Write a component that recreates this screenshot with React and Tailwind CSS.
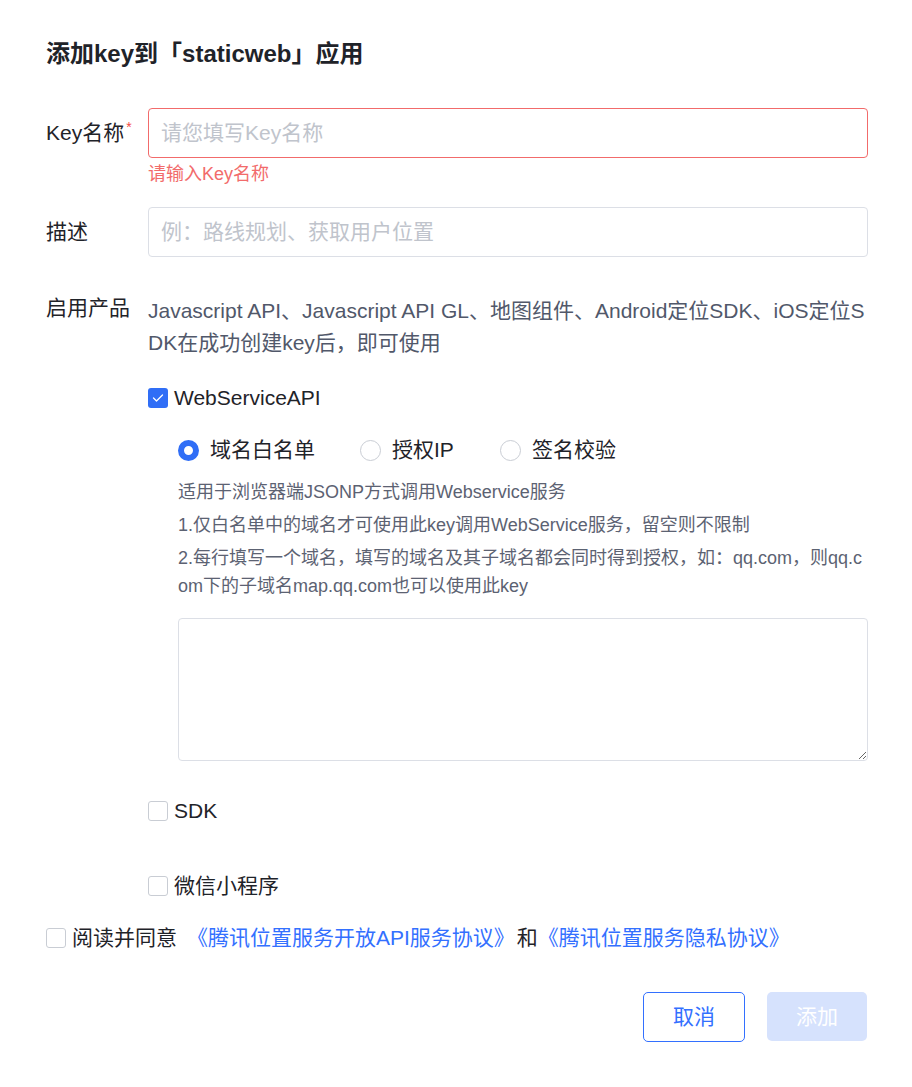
const font = { fontFamily: '"Liberation Sans", "Noto Sans CJK SC", sans-serif' };

function Checkbox({ checked }) {
  return checked ? (
    <span className="flex h-5 w-5 shrink-0 items-center justify-center rounded-[3px] bg-[#306ef6]">
      <svg width="12" height="10" viewBox="0 0 12 10" fill="none">
        <path d="M1.5 5 L4.5 8 L10.5 2" stroke="white" strokeWidth="1.3" strokeLinecap="round" strokeLinejoin="round" />
      </svg>
    </span>
  ) : (
    <span className="h-5 w-5 shrink-0 rounded-[3px] border border-[#c9cdd4] bg-white" />
  );
}

function Radio({ checked, label }) {
  return (
    <label className="flex items-center gap-[11px]">
      {checked ? (
        <span className="h-[21px] w-[21px] rounded-full border-[6px] border-[#306ef6] bg-white" />
      ) : (
        <span className="h-[21px] w-[21px] rounded-full border border-[#c9cdd4] bg-white" />
      )}
      <span>{label}</span>
    </label>
  );
}

export default function App() {
  return (
    <div className="min-h-[1087px] w-[912px] bg-white pt-[40px] text-[#1f2329]" style={font}>
      <div className="ml-[46px] w-[822px]">
        {/* Title */}
        <h2 className="text-[24px] font-bold leading-[28px]">添加key到「staticweb」应用</h2>

        {/* Key name */}
        <div className="mt-[40px] flex">
          <div className="w-[102px] text-[21px] leading-[50px]">
            Key名称<span className="relative -top-[8px] ml-[2px] text-[14px] text-[#f54a45]">*</span>
          </div>
          <div className="flex-1">
            <input
              placeholder="请您填写Key名称"
              className="h-[50px] w-full rounded-[4px] border border-[#f26b6b] px-[12px] text-[21px] outline-none placeholder:text-[#c0c4cc]"
            />
            <div className="mt-[5px] text-[18px] leading-[22px] text-[#f26b6b]">请输入Key名称</div>
          </div>
        </div>

        {/* Description */}
        <div className="mt-[22px] flex">
          <div className="w-[102px] text-[21px] leading-[50px]">描述</div>
          <input
            placeholder="例：路线规划、获取用户位置"
            className="h-[50px] flex-1 rounded-[4px] border border-[#dcdfe6] px-[12px] text-[21px] outline-none placeholder:text-[#c0c4cc]"
          />
        </div>

        {/* Products */}
        <div className="mt-[35px] flex">
          <div className="w-[102px] shrink-0 text-[21px] leading-[32px]">启用产品</div>
          <div className="flex-1">
            <p className="break-all pt-[3px] text-[21px] leading-[32px] text-[#51586a]">
              Javascript API、Javascript API GL、地图组件、Android定位SDK、iOS定位SDK在成功创建key后，即可使用
            </p>

            <div className="mt-[25px] flex items-center gap-[6px] text-[21px] leading-[28px]">
              <Checkbox checked />
              <span>WebServiceAPI</span>
            </div>

            <div className="ml-[30px]">
              <div className="mt-[24px] flex items-center text-[21px] leading-[28px]">
                <div className="w-[182px]"><Radio checked label="域名白名单" /></div>
                <div className="w-[140px]"><Radio label="授权IP" /></div>
                <Radio label="签名校验" />
              </div>

              <div className="mt-[14px] flex flex-col gap-[5px] break-all text-[18px] leading-[28px] text-[#5c6272]">
                <p>适用于浏览器端JSONP方式调用Webservice服务</p>
                <p>1.仅白名单中的域名才可使用此key调用WebService服务，留空则不限制</p>
                <p>2.每行填写一个域名，填写的域名及其子域名都会同时得到授权，如：qq.com，则qq.com下的子域名map.qq.com也可以使用此key</p>
              </div>

              <textarea className="mt-[18px] block h-[143px] w-full rounded-[4px] border border-[#dcdfe6] outline-none" />
            </div>

            <div className="mt-[36px] flex items-center gap-[6px] text-[21px] leading-[28px]">
              <Checkbox />
              <span>SDK</span>
            </div>

            <div className="mt-[47px] flex items-center gap-[6px] text-[21px] leading-[28px]">
              <Checkbox />
              <span>微信小程序</span>
            </div>
          </div>
        </div>

        {/* Agreement */}
        <div className="mt-[24px] flex items-center gap-[6px] text-[21px] leading-[28px]">
          <Checkbox />
          <span>阅读并同意</span>
          <a className="ml-[4px] text-[#3370ff]">《腾讯位置服务开放API服务协议》</a>
          <span className="-ml-[4px]">和</span>
          <a className="-ml-[6px] text-[#3370ff]">《腾讯位置服务隐私协议》</a>
        </div>

        {/* Actions */}
        <div className="mt-[40px] flex justify-end gap-[22px] pr-[1px]">
          <button className="h-[50px] w-[102px] rounded-[5px] border border-[#3370ff] bg-white text-[21px] text-[#3370ff]">
            取消
          </button>
          <button className="h-[49px] w-[100px] rounded-[5px] bg-[#d6e2fd] text-[21px] text-white">
            添加
          </button>
        </div>
      </div>
    </div>
  );
}
